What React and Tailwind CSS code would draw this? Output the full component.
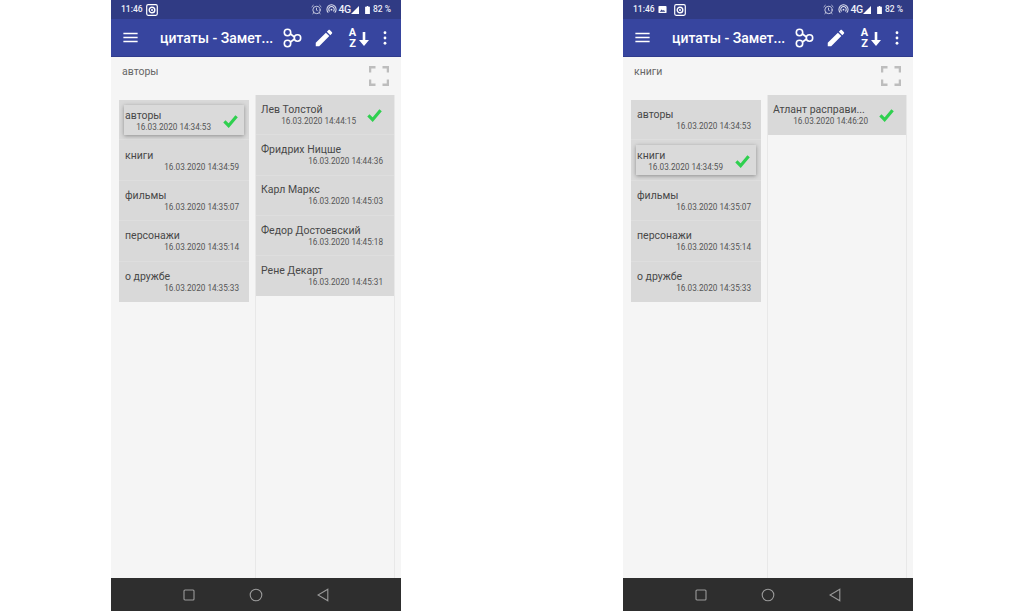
import React from 'react';
import { AlarmClock } from 'lucide-react';

const categories = [
  { name: 'авторы', date: '16.03.2020 14:34:53' },
  { name: 'книги', date: '16.03.2020 14:34:59' },
  { name: 'фильмы', date: '16.03.2020 14:35:07' },
  { name: 'персонажи', date: '16.03.2020 14:35:14' },
  { name: 'о дружбе', date: '16.03.2020 14:35:33' },
];

const authors = [
  { name: 'Лев Толстой', date: '16.03.2020 14:44:15' },
  { name: 'Фридрих Ницше', date: '16.03.2020 14:44:36' },
  { name: 'Карл Маркс', date: '16.03.2020 14:45:03' },
  { name: 'Федор Достоевский', date: '16.03.2020 14:45:18' },
  { name: 'Рене Декарт', date: '16.03.2020 14:45:31' },
];

const books = [{ name: 'Атлант расправи...', date: '16.03.2020 14:46:20' }];

function Check() {
  return (
    <svg viewBox="0 0 16 14" className="w-[15px] h-[14px] shrink-0">
      <path d="M1.5 7.5 L6 12 L14.5 2" fill="none" stroke="#2fd04f" strokeWidth="3.4" />
    </svg>
  );
}

function ScreenshotIcon() {
  return (
    <svg viewBox="0 0 12 12" className="w-[12px] h-[12px]">
      <rect x="0.7" y="0.7" width="10.6" height="10.6" rx="1.5" fill="none" stroke="#fff" strokeWidth="1.2" />
      <circle cx="6" cy="6" r="2.8" fill="none" stroke="#fff" strokeWidth="1.4" />
      <circle cx="6" cy="6" r="1" fill="#fff" />
    </svg>
  );
}

function PictureIcon() {
  return (
    <svg viewBox="0 0 10 10" className="w-[9px] h-[9px]">
      <rect x="0.5" y="1" width="9" height="8" rx="1" fill="#fff" />
      <path d="M2 7.5 L4 5 L5.5 6.5 L6.5 5.5 L8 7.5 Z" fill="#303c85" />
    </svg>
  );
}

function StatusBar({ extra }) {
  return (
    <div className="h-[19px] bg-[#303b84] flex items-center pl-[10px] pr-[10px] text-[#eef0f8] text-[8.5px] font-medium">
      <span className="mr-[3px]">11:46</span>
      {extra && <span className="mr-[7px]"><PictureIcon /></span>}
      <ScreenshotIcon />
      <div className="ml-auto flex items-center">
        <AlarmClock size={11} strokeWidth={1.8} className="text-[#e4e6f2] mr-[4px]" />
        <svg viewBox="0 0 12 12" className="w-[11px] h-[11px] mr-[1px]">
          <path d="M2.5 9.5 A5 5 0 1 1 9.5 9.5 M4 8 A3 3 0 1 1 8 8" fill="none" stroke="#e4e6f2" strokeWidth="1.1" />
          <circle cx="6" cy="6.2" r="1" fill="#e4e6f2" />
        </svg>
        <span className="text-[10.5px] tracking-[-0.3px]">4G</span>
        <svg viewBox="0 0 8 8" className="w-[8px] h-[8px] mr-[6px]">
          <path d="M0 8 L8 0 L8 8 Z" fill="#fff" />
        </svg>
        <svg viewBox="0 0 6 10" className="w-[5px] h-[8px] mr-[3px]">
          <path d="M2 0 H4 V1 H6 V10 H0 V1 H2 Z" fill="#fff" />
        </svg>
        <span>82 %</span>
      </div>
    </div>
  );
}

function AppBar({ title }) {
  return (
    <div className="h-[38px] bg-[#37459f] flex items-center text-white border-b border-[#2f3b8c]">
      <svg viewBox="0 0 24 24" className="w-[19px] h-[19px] ml-[10px] mr-[20px] shrink-0" fill="#fff">
        <path d="M3 18h18v-2H3v2zm0-5h18v-2H3v2zm0-7v2h18V6H3z" />
      </svg>
      <span className="text-[14px] font-medium w-[117px] shrink-0 whitespace-nowrap pt-[1px]">{title}</span>
      <svg viewBox="0 0 20 20" className="w-[20px] h-[20px] ml-[5px] shrink-0" fill="none" stroke="#fff" strokeWidth="1.6">
        <circle cx="5.5" cy="4.5" r="3.2" />
        <circle cx="5.5" cy="15.5" r="3.2" />
        <circle cx="15.5" cy="10" r="3.2" />
        <path d="M8.5 6 L12.5 9 M8.5 14 L12.5 11" />
      </svg>
      <svg viewBox="0 0 24 24" className="w-[22px] h-[22px] ml-[11px] shrink-0" fill="#fff">
        <path d="M3 17.25V21h3.75L17.81 9.94l-3.75-3.75L3 17.25zM20.71 7.04c.39-.39.39-1.02 0-1.41l-2.34-2.34c-.39-.39-1.02-.39-1.41 0l-1.83 1.83 3.75 3.75 1.83-1.83z" />
      </svg>
      <div className="ml-[12px] w-[22px] h-[22px] relative shrink-0">
        <div className="flex flex-col items-center w-[11px] text-[11px] leading-[11px] font-bold">
          <span>A</span>
          <span>Z</span>
        </div>
        <svg viewBox="0 0 10 14" className="absolute right-0 top-[5px] w-[10px] h-[14px]" fill="#fff">
          <path d="M3.7 0 H6.3 V8 H10 L5 14 L0 8 H3.7 Z" />
        </svg>
      </div>
      <svg viewBox="0 0 4 16" className="w-[4px] h-[14px] ml-[14px] shrink-0" fill="#fff">
        <circle cx="2" cy="2" r="1.6" />
        <circle cx="2" cy="8" r="1.6" />
        <circle cx="2" cy="14" r="1.6" />
      </svg>
    </div>
  );
}

function ExpandIcon() {
  return (
    <svg viewBox="0 0 20 20" className="w-[20px] h-[20px]" fill="none" stroke="#bdbdbd" strokeWidth="2.5">
      <path d="M1 6.5 V1.2 H6.5 M13.5 1.2 H19 V6.5 M1 13.5 V18.8 H6.5 M13.5 18.8 H19 V13.5" />
    </svg>
  );
}

function RowText({ item }) {
  return (
    <div className="flex-1 min-w-0 whitespace-nowrap">
      <div className="text-[10.5px] leading-[13px] text-[#484848]">{item.name}</div>
      <div className="text-[8.2px] leading-[11px] text-[#555] text-right">{item.date}</div>
    </div>
  );
}

function NoteRow({ item, selected, big }) {
  if (selected && big) {
    return (
      <div className="h-[40.3px] flex items-center pl-[5px] pr-[12px] border-b border-[#dedede] last:border-b-0">
        <RowText item={item} />
        <div className="ml-[11px]"><Check /></div>
      </div>
    );
  }
  if (selected) {
    return (
      <div className="h-[40.4px] px-[5px] pt-[5px] border-b border-[#dedede]">
        <div className="h-[30px] bg-[#dadada] shadow-[0_1px_4px_rgba(0,0,0,0.35)] flex items-center pl-[1px] pr-[6px] pt-[1px]">
          <RowText item={item} />
          <div className="ml-[12px]"><Check /></div>
        </div>
      </div>
    );
  }
  return (
    <div className={(big ? 'h-[40.3px] pl-[5px] pr-[11px]' : 'h-[40.4px] pl-[6px] pr-[10px] pt-[1px]') + ' flex items-center border-b border-[#dedede] last:border-b-0'}>
      <RowText item={item} />
    </div>
  );
}

function Phone({ label, selected, notes, extra }) {
  return (
    <div className="w-[290px] h-[611px] flex flex-col bg-[#f5f5f5] shrink-0">
      <StatusBar extra={extra} />
      <AppBar title="цитаты - Замет..." />
      <div className="flex-1 min-h-0 flex flex-col">
        <div className="h-[38px] flex justify-between items-start pl-[11px] pr-[12px] pt-[9px]">
          <span className="text-[10.5px] leading-[10px] text-[#666] pt-[1px]">{label}</span>
          <ExpandIcon />
        </div>
        <div className="flex-1 min-h-0 flex pl-[8px] pr-[6px]">
          <div className="w-[130px] pt-[5px] mr-[6px] shrink-0">
            <div className="bg-[#d9d9d9]">
              {categories.map((item, i) => (
                <NoteRow key={item.name} item={item} selected={i === selected} />
              ))}
            </div>
          </div>
          <div className="flex-1 border-x border-[#e8e8e8]">
            <div className="bg-[#d9d9d9]">
              {notes.map((item, i) => (
                <NoteRow key={item.name} item={item} selected={i === 0} big />
              ))}
            </div>
          </div>
        </div>
      </div>
      <div className="h-[33px] bg-[#2e2e2e] flex items-center justify-center gap-[54px]">
        <svg viewBox="0 0 12 12" className="w-[12px] h-[12px]" fill="none" stroke="#9a9a9a" strokeWidth="1.1">
          <rect x="1" y="1" width="10" height="10" rx="1" />
        </svg>
        <svg viewBox="0 0 14 14" className="w-[14px] h-[14px]" fill="none" stroke="#9a9a9a" strokeWidth="1.1">
          <circle cx="7" cy="7" r="5.8" />
        </svg>
        <svg viewBox="0 0 12 14" className="w-[12px] h-[14px]" fill="none" stroke="#9a9a9a" strokeWidth="1.1">
          <path d="M10.8 1.2 V12.8 L1 7 Z" />
        </svg>
      </div>
    </div>
  );
}

export default function App() {
  return (
    <div className="w-[1024px] h-[611px] bg-white overflow-hidden flex justify-center gap-[222px] font-['Roboto',sans-serif]">
      <Phone label="авторы" selected={0} notes={authors} />
      <Phone label="книги" selected={1} notes={books} extra />
    </div>
  );
}
